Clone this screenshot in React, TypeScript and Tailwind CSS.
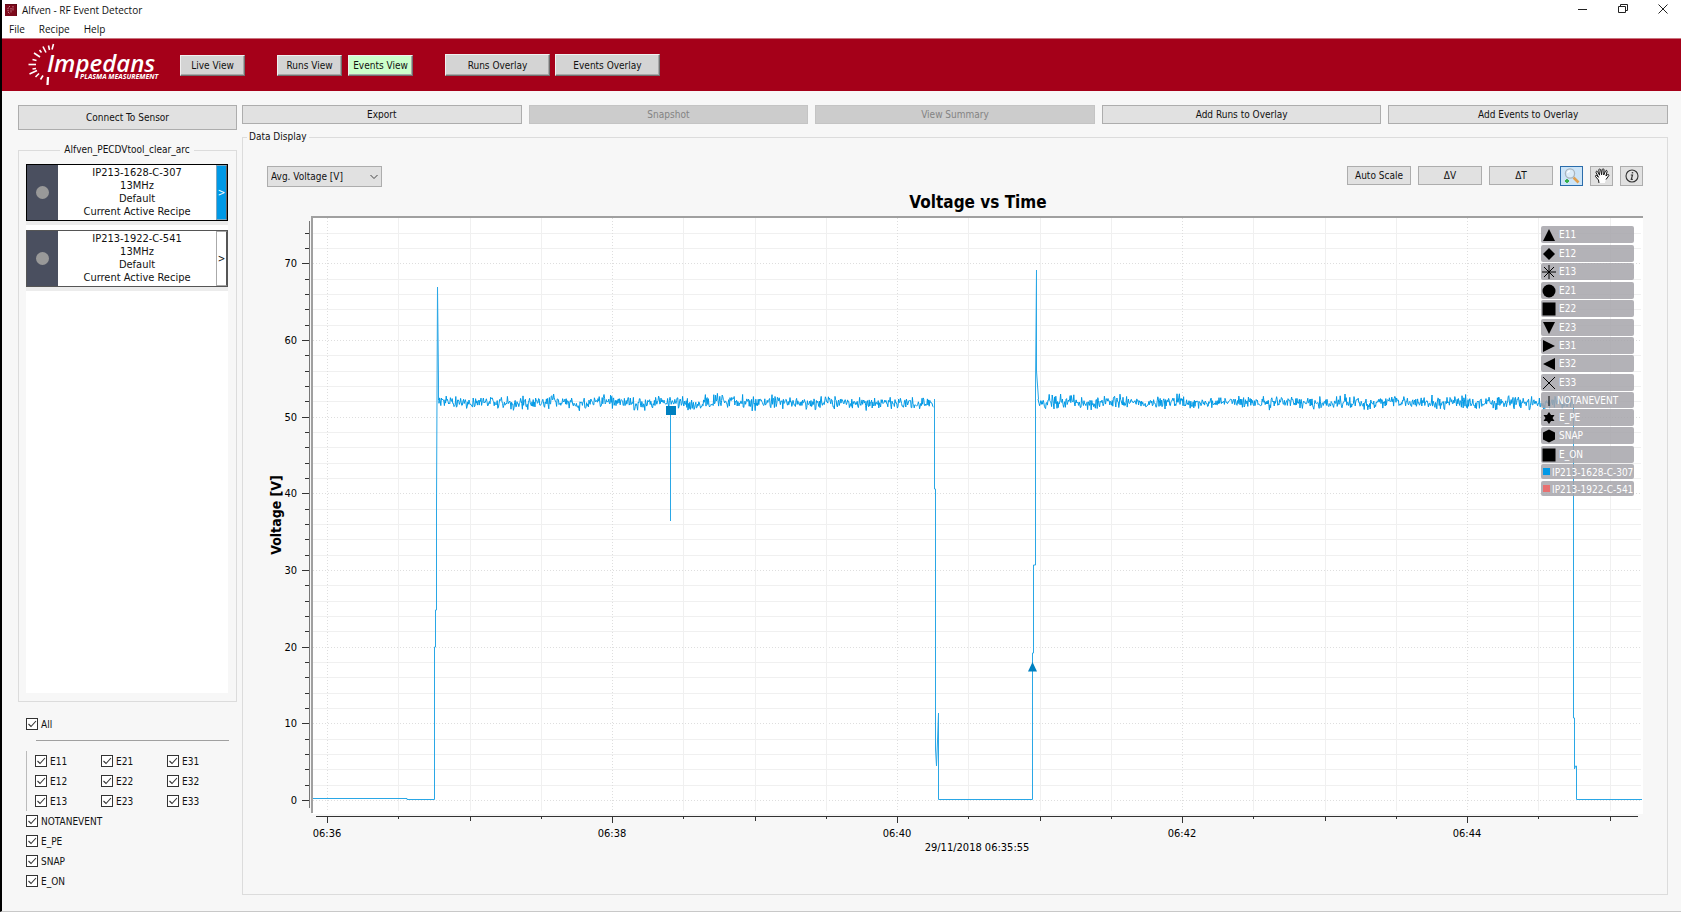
import { useState } from "react";
import type { ReactNode } from "react";

const ACTIONS = [
  { label: "Export", disabled: false },
  { label: "Snapshot", disabled: true },
  { label: "View Summary", disabled: true },
  { label: "Add Runs to Overlay", disabled: false },
  { label: "Add Events to Overlay", disabled: false },
];

const SENSORS = [
  { id: "IP213-1628-C-307", active: true },
  { id: "IP213-1922-C-541", active: false },
];

const EVENT_GRID = ["E11", "E21", "E31", "E12", "E22", "E32", "E13", "E23", "E33"];
const EVENT_LIST = ["NOTANEVENT", "E_PE", "SNAP", "E_ON"];

function AppIcon() {
  return (
    <svg width="12" height="12" viewBox="0 0 12 12" aria-hidden="true">
      <rect width="12" height="12" fill="#7d0a1c" />
      <path d="M5 2 L3 4 L3 8 L5 10 M8 2 V7 M6 4 V9" stroke="#d9a0a8" strokeWidth="0.8" fill="none" strokeDasharray="1.5 0.8" />
      <path d="M0 0 H12 V12" stroke="#4d0610" fill="none" />
    </svg>
  );
}

function TitleBar() {
  return (
    <div className="flex h-5 items-start bg-white pl-[3px] pr-3">
      <div className="flex h-5 items-center gap-[5px]">
        <AppIcon />
        <span className="font-['Open_Sans',sans-serif] text-[10px] leading-5">Alfven - RF Event Detector</span>
      </div>
      <div className="ml-auto flex gap-7 pt-0.5">
        <button aria-label="Minimize">
          <svg width="12" height="14" viewBox="0 0 12 14" fill="none" stroke="#222">
            <path d="M1 7.5H10" />
          </svg>
        </button>
        <button aria-label="Restore">
          <svg width="12" height="14" viewBox="0 0 12 14" fill="none" stroke="#222">
            <path d="M1.5 4.5H8.5V10.5H1.5ZM3.5 4.5V2.5H10.5V8.5H8.5" />
          </svg>
        </button>
        <button aria-label="Close">
          <svg width="12" height="14" viewBox="0 0 12 14" fill="none" stroke="#222">
            <path d="M1.5 2.5L10.5 11.5M10.5 2.5L1.5 11.5" />
          </svg>
        </button>
      </div>
    </div>
  );
}

function MenuBar() {
  return (
    <nav className="flex h-[18px] gap-[14px] bg-white pl-[7px] font-['Open_Sans',sans-serif] text-[10px] leading-[19px]">
      <button>File</button>
      <button>Recipe</button>
      <button>Help</button>
    </nav>
  );
}

function Logo() {
  return (
    <svg className="ml-6" width="134" height="46" viewBox="26 42 134 46" role="img" aria-label="Impedans Plasma Measurement">
      <g stroke="#fff" strokeWidth="1.6">
        <path d="M53.5 44L52 49.5" />
        <path d="M48.5 45.5L49.5 50" />
        <path d="M43 46.5L46 52.5" />
        <path d="M39.5 50L41.5 52.5" />
        <path d="M34 53L40 57" />
        <path d="M32.5 59.5L36.5 60.5" />
        <path d="M28.5 64.5H36" />
        <path d="M32.5 69L36 68.5" />
        <path d="M29.5 74L37 70.5" />
        <path d="M35.5 77L39 73.5" />
        <path d="M40.5 79.5L43 75.5" />
        <path d="M47.5 85L48 77" strokeWidth="2.2" />
      </g>
      <text x="47" y="72" fill="#fff" fontFamily="Open Sans, sans-serif" fontStyle="italic" fontWeight="600" fontSize="24">
        Impedans
      </text>
      <text x="80" y="79" fill="#fff" fontFamily="Open Sans, sans-serif" fontStyle="italic" fontWeight="700" fontSize="7">
        PLASMA MEASUREMENT
      </text>
    </svg>
  );
}

function ViewButton({ children, active, wide }: { children: ReactNode; active?: boolean; wide?: boolean }) {
  return (
    <button
      className={`border border-t-[#f0f0f0] border-l-[#f0f0f0] border-r-[#707070] border-b-[#707070] shadow-[inset_-1px_-1px_#a8a8a8] ${
        wide ? "h-[22px] w-[105px]" : "h-[21px] w-[65px]"
      } ${active ? "bg-[#ccffcc]" : "bg-[#d4d4d4]"}`}
    >
      {children}
    </button>
  );
}

function Header() {
  return (
    <header className="flex h-[53px] items-center border-t border-[#c9747f] bg-[#a50019]">
      <Logo />
      <div className="ml-5 flex items-center">
        <ViewButton>Live View</ViewButton>
        <div className="ml-8 flex gap-[6px]">
          <ViewButton>Runs View</ViewButton>
          <ViewButton active>Events View</ViewButton>
        </div>
        <div className="ml-8 flex gap-[5px]">
          <ViewButton wide>Runs Overlay</ViewButton>
          <ViewButton wide>Events Overlay</ViewButton>
        </div>
      </div>
    </header>
  );
}

function CheckItem({ label }: { label: string }) {
  const [checked, setChecked] = useState(true);

  return (
    <label className="flex h-5 items-center gap-[3px]">
      <span className="grid size-3">
        <input
          type="checkbox"
          checked={checked}
          onChange={(e) => setChecked(e.target.checked)}
          className="col-start-1 row-start-1 size-3 appearance-none border border-[#333] bg-white"
        />
        {checked && (
          <svg className="pointer-events-none col-start-1 row-start-1" width="12" height="12" viewBox="0 0 12 12" fill="none">
            <path d="M2.5 6L5 8.5L10 3" stroke="#333" strokeWidth="1.1" />
          </svg>
        )}
      </span>
      {label}
    </label>
  );
}

function SensorCard({ id, active }: { id: string; active: boolean }) {
  return (
    <div className="border-b-4 border-[#ececec]">
      <div className={`flex h-[57px] border ${active ? "border-black" : "border-[#555]"}`}>
        <div className="flex w-[31px] items-center justify-center bg-[#4a4f5f]">
          <span className="size-[13px] rounded-full bg-[#999]" />
        </div>
        <div className="flex-1 pt-px text-center text-[11px] leading-[13px]">
          <p>{id}</p>
          <p>13MHz</p>
          <p>Default</p>
          <p>Current Active Recipe</p>
        </div>
        <button
          aria-label={`Open ${id}`}
          className={`w-[11px] border text-[10px] ${
            active ? "border-[#7da7c0] border-r-[#666] bg-[#0099e6] text-white" : "border-[#aaa] border-r-[#555] bg-white"
          }`}
        >
          &gt;
        </button>
      </div>
    </div>
  );
}

function Sidebar() {
  return (
    <aside className="flex w-[219px] shrink-0 flex-col pb-1">
      <button className="h-[25px] border border-[#adadad] bg-[#e1e1e1]">Connect To Sensor</button>
      <fieldset className="mt-3 flex min-w-0 flex-1 flex-col border border-[#dcdcdc] pb-2 pl-[7px] pr-2 pt-[6px]">
        <legend className="mx-auto h-4 px-1 leading-4">Alfven_PECDVtool_clear_arc</legend>
        <div className="flex flex-1 flex-col gap-[5px] bg-white">
          {SENSORS.map((s) => (
            <SensorCard key={s.id} id={s.id} active={s.active} />
          ))}
        </div>
      </fieldset>
      <div className="pl-2 pt-3">
        <CheckItem label="All" />
        <hr className="ml-2.5 mr-2 mt-[6px] border-[#a0a0a0]" />
        <div className="mt-[10px] grid w-[207px] grid-cols-3 border-l border-[#bbb] pl-2">
          {EVENT_GRID.map((e) => (
            <CheckItem key={e} label={e} />
          ))}
        </div>
        {EVENT_LIST.map((e) => (
          <CheckItem key={e} label={e} />
        ))}
      </div>
    </aside>
  );
}

// ---- chart ----

const yPos = (v: number) => 801 - v * 7.667;
const xPos = (quarter: number) => 327.5 + quarter * 71.25;

const Y_TICKS = Array.from({ length: 38 }, (_, i) => i * 2);
const X_TICKS = Array.from({ length: 19 }, (_, i) => i);

// small deterministic generator, keeps the trace stable between renders
function noise(from: number, to: number, seed: number) {
  let s = seed;
  const rand = () => {
    s = (s * 16807) % 2147483647;
    return s / 2147483647;
  };
  let d = "";
  for (let x = from; x < to; x += 0.6) {
    const y = 403.5 + (rand() + rand() + rand() - 1.5) * 6 + Math.sin(x / 9) * 1;
    d += `L${x.toFixed(1)} ${y.toFixed(1)}`;
  }
  return d;
}

const NOISE = [
  "M439 400" + noise(439, 934, 4211),
  "M1038 400" + noise(1039, 1573, 917),
];

const EDGES = [
  "M313 799.5H407V800.5H434.5V648H435.5V611H436.5V507L437.5 288L438.5 382V401",
  "M934.5 400V490H935.5V750L936.5 767L937.5 742L938.5 714V800.5H1032.5V654H1033.5V566H1035.5V391L1036.5 271V372L1038.5 400",
  "M1573.5 403V719H1574.5V770L1575.5 767H1576.5V800.5H1642",
  "M670.5 412V522",
];

const MARKERS: { label: string; y: number; h: number; icon: ReactNode }[] = [
  { label: "E11", y: 227, h: 17, icon: <path d="M0 -6L6 6H-6Z" /> },
  { label: "E12", y: 246, h: 17, icon: <path d="M0 -6L6 0L0 6L-6 0Z" /> },
  { label: "E13", y: 264, h: 17, icon: <path d="M0 -7V7M-7 0H7M-5 -5L5 5M5 -5L-5 5" stroke="#000" /> },
  { label: "E21", y: 283, h: 17, icon: <circle r="6.5" /> },
  { label: "E22", y: 301, h: 17, icon: <rect x="-6.5" y="-6.5" width="13" height="13" /> },
  { label: "E23", y: 320, h: 17, icon: <path d="M0 6L6 -6H-6Z" /> },
  { label: "E31", y: 338, h: 17, icon: <path d="M6 0L-6 -6V6Z" /> },
  { label: "E32", y: 356, h: 17, icon: <path d="M-6 0L6 -6V6Z" /> },
  { label: "E33", y: 375, h: 17, icon: <path d="M-6 -6L6 6M6 -6L-6 6" stroke="#000" /> },
  { label: "NOTANEVENT", y: 393, h: 16, icon: <path d="M0 -5V5" stroke="#000" /> },
  { label: "E_PE", y: 410, h: 17, icon: <path d="M0 -6L2 -3H5.5L3.5 0L5.5 3H2L0 6L-2 3H-5.5L-3.5 0L-5.5 -3H-2Z" /> },
  { label: "SNAP", y: 428, h: 17, icon: <path d="M0 -6.5L6 -3.5V3.5L0 6.5L-6 3.5V-3.5Z" /> },
  { label: "E_ON", y: 447, h: 17, icon: <rect x="-6.5" y="-6.5" width="13" height="13" /> },
];

const CURVES = [
  { label: "IP213-1628-C-307", y: 465, color: "#0099e6" },
  { label: "IP213-1922-C-541", y: 482, color: "#e87070" },
];

function Legend() {
  return (
    <g fontSize="10">
      {MARKERS.map((m) => (
        <g key={m.label}>
          <rect x="1541" y={m.y} width="93" height={m.h} rx="2" fill="#a6a5aa" fillOpacity="0.85" />
          <g transform={`translate(1549 ${m.y + 9})`}>{m.icon}</g>
          <text x={m.label === "NOTANEVENT" ? 1557 : 1559} y={m.y + 12} fill="#fff">
            {m.label}
          </text>
        </g>
      ))}
      {CURVES.map((c) => (
        <g key={c.label}>
          <rect x="1541" y={c.y} width="93" height="15" rx="2" fill="#a6a5aa" fillOpacity="0.85" />
          <rect x="1543" y={c.y + 4} width="7" height="7" fill={c.color} />
          <text x="1552" y={c.y + 12} fill="#fff">
            {c.label}
          </text>
        </g>
      ))}
    </g>
  );
}

function Chart() {
  return (
    <svg
      className="mt-[3px] block w-full font-['DejaVu_Sans_Condensed','DejaVu_Sans',sans-serif] text-[11px]"
      viewBox="243 191 1424 680"
      role="img"
      aria-label="Voltage vs Time"
    >
      <text x="978" y="209" textAnchor="middle" fontSize="17" fontWeight="700">
        Voltage vs Time
      </text>
      <text transform="translate(281 516) rotate(-90)" textAnchor="middle" fontSize="14" fontWeight="700">
        Voltage [V]
      </text>

      <rect x="312" y="218" width="1331" height="597" fill="#fff" />

      <g shapeRendering="crispEdges">
        {Y_TICKS.map((v) => {
          const y = Math.round(yPos(v));
          const major = v % 10 === 0;
          return (
            <g key={v}>
              <path d={`M313 ${y + 0.5}H1641`} stroke={major ? "#dedede" : "#f0f0f0"} strokeDasharray={major ? "1 2" : undefined} />
              <path d={`M${major ? 302 : 305} ${y + 0.5}H309`} stroke="#333" />
            </g>
          );
        })}
        {X_TICKS.map((i) => {
          const x = Math.floor(xPos(i));
          const major = i % 4 === 0;
          return (
            <g key={i}>
              <path d={`M${x + 0.5} 219V812`} stroke={major ? "#dedede" : "#f0f0f0"} strokeDasharray={major ? "1 2" : undefined} />
              <path d={`M${x + 0.5} 818V${major ? 824 : i % 2 === 0 ? 822 : 820}`} stroke="#333" />
            </g>
          );
        })}
        <path d="M309.5 222V809" stroke="#777" />
        <path d="M312 814V218" stroke="#a0a0a0" strokeWidth="2" />
        <path d="M311 218H1643" stroke="#a0a0a0" strokeWidth="2" />
        <path d="M316 817.5H1638" stroke="#333" />
      </g>

      {[0, 10, 20, 30, 40, 50, 60, 70].map((v) => (
        <text key={v} x="297" y={Math.round(yPos(v)) + 4} textAnchor="end">
          {v}
        </text>
      ))}
      {["06:36", "06:38", "06:40", "06:42", "06:44"].map((t, i) => (
        <text key={t} x={Math.floor(xPos(i * 4))} y="838" textAnchor="middle">
          {t}
        </text>
      ))}
      <text x="977" y="852" textAnchor="middle">
        29/11/2018 06:35:55
      </text>

      <g fill="none" stroke="#0099e6">
        {EDGES.map((d) => (
          <path key={d} d={d} stroke="#2aa7e6" />
        ))}
        {NOISE.map((d) => (
          <path key={d} d={d} />
        ))}
      </g>
      <rect x="666" y="407" width="10" height="9" fill="#0080c0" />
      <path d="M1032.5 663L1037 672.5H1028Z" fill="#0080c0" />

      <Legend />
    </svg>
  );
}

function ZoomIcon() {
  return (
    <svg width="16" height="16" viewBox="0 0 16 16" fill="none">
      <path d="M9.5 9.5L14.5 14.5" stroke="#e0a050" strokeWidth="2.6" />
      <circle cx="6" cy="5.5" r="4.6" fill="#dcecf8" stroke="#a9b4bd" strokeWidth="1.3" />
      <path d="M3.5 5A3 3 0 0 1 6 2.8" stroke="#fff" strokeWidth="1.2" />
      <path d="M3 11V15M1 13H5" stroke="#35b04a" strokeWidth="1.8" />
    </svg>
  );
}

function HandIcon() {
  return (
    <svg width="16" height="16" viewBox="0 0 16 16">
      <path
        d="M5 15L4.5 12L1.5 8.5C1 7.5 2.3 7 3 7.8L4.5 9.3L2 4.4C1.7 3.2 3.2 2.7 3.7 3.8L5.6 7.2L4.8 2C4.7 .8 6.4 .7 6.7 1.9L7.6 6.8L8.2 1.6C8.4 .5 10 .6 10 1.8L9.7 7L11.5 3C12 1.9 13.4 2.4 13.1 3.6L11.9 8L13.6 6.6C14.5 6 15.4 7 14.6 7.9L12 11.5L10.8 15"
        fill="#fff"
      />
      <path
        d="M5 15L4.5 12L1.5 8.5C1 7.5 2.3 7 3 7.8L4.5 9.3L2 4.4C1.7 3.2 3.2 2.7 3.7 3.8L5.6 7.2L4.8 2C4.7 .8 6.4 .7 6.7 1.9L7.6 6.8L8.2 1.6C8.4 .5 10 .6 10 1.8L9.7 7L11.5 3C12 1.9 13.4 2.4 13.1 3.6L11.9 8L13.6 6.6C14.5 6 15.4 7 14.6 7.9L12 11.5"
        fill="none"
        stroke="#111"
        strokeWidth="1"
      />
    </svg>
  );
}

function InfoIcon() {
  return (
    <svg width="16" height="16" viewBox="0 0 16 16" fill="none" stroke="#333">
      <circle cx="8" cy="8" r="6" strokeWidth="1.1" />
      <path d="M6.8 7H8.5L7.3 11.3H8.8" strokeWidth="1.2" />
      <path d="M8.6 4.2L8.4 5.4" strokeWidth="1.5" />
    </svg>
  );
}

function ToolButton({ label, active, children }: { label: string; active?: boolean; children: ReactNode }) {
  return (
    <button
      aria-label={label}
      className={`flex h-5 w-[23px] items-center justify-center border ${
        active ? "border-[#2a6cab] bg-[#cce4f7]" : "border-[#adadad] bg-[#e1e1e1]"
      }`}
    >
      {children}
    </button>
  );
}

function Toolbar() {
  return (
    <div className="flex items-start px-6 pt-[21px]">
      <div className="grid w-[115px] items-center">
        <select
          aria-label="Measurement"
          className="col-start-1 row-start-1 h-[21px] appearance-none border border-[#adadad] bg-[#e1e1e1] pl-[3px]"
        >
          <option>Avg. Voltage [V]</option>
        </select>
        <svg className="pointer-events-none col-start-1 row-start-1 mr-1 justify-self-end" width="8" height="6" viewBox="0 0 8 6" fill="none">
          <path d="M0.5 1L4 4.5L7.5 1" stroke="#444" />
        </svg>
      </div>
      <div className="ml-auto flex gap-[7px]">
        {["Auto Scale", "ΔV", "ΔT"].map((b) => (
          <button key={b} className="h-[19px] w-16 border border-[#adadad] bg-[#e1e1e1] leading-4">
            {b}
          </button>
        ))}
        <ToolButton label="Zoom" active>
          <ZoomIcon />
        </ToolButton>
        <ToolButton label="Pan">
          <HandIcon />
        </ToolButton>
        <ToolButton label="Info">
          <InfoIcon />
        </ToolButton>
      </div>
    </div>
  );
}

export default function App() {
  return (
    <div className="flex min-h-screen flex-col border-b border-l-2 border-b-[#c8c8c8] border-l-black bg-[#f7f7f7] font-['DejaVu_Sans_Condensed','DejaVu_Sans',sans-serif] text-[10px] text-[#111]">
      <TitleBar />
      <MenuBar />
      <Header />
      <div className="flex flex-1 gap-[5px] pb-4 pl-4 pr-[13px] pt-[14px]">
        <Sidebar />
        <main className="flex min-w-0 flex-1 flex-col">
          <div className="grid grid-cols-5 gap-[7px]">
            {ACTIONS.map((a) => (
              <button
                key={a.label}
                disabled={a.disabled}
                className="h-[19px] border border-[#adadad] bg-[#e1e1e1] leading-4 disabled:border-[#c4c4c4] disabled:bg-[#cccccc] disabled:text-[#838383]"
              >
                {a.label}
              </button>
            ))}
          </div>
          <fieldset className="mt-[5px] min-w-0 flex-1 border border-[#dcdcdc]">
            <legend className="ml-1 h-4 px-0.5 leading-4">Data Display</legend>
            <Toolbar />
            <Chart />
          </fieldset>
        </main>
      </div>
    </div>
  );
}
